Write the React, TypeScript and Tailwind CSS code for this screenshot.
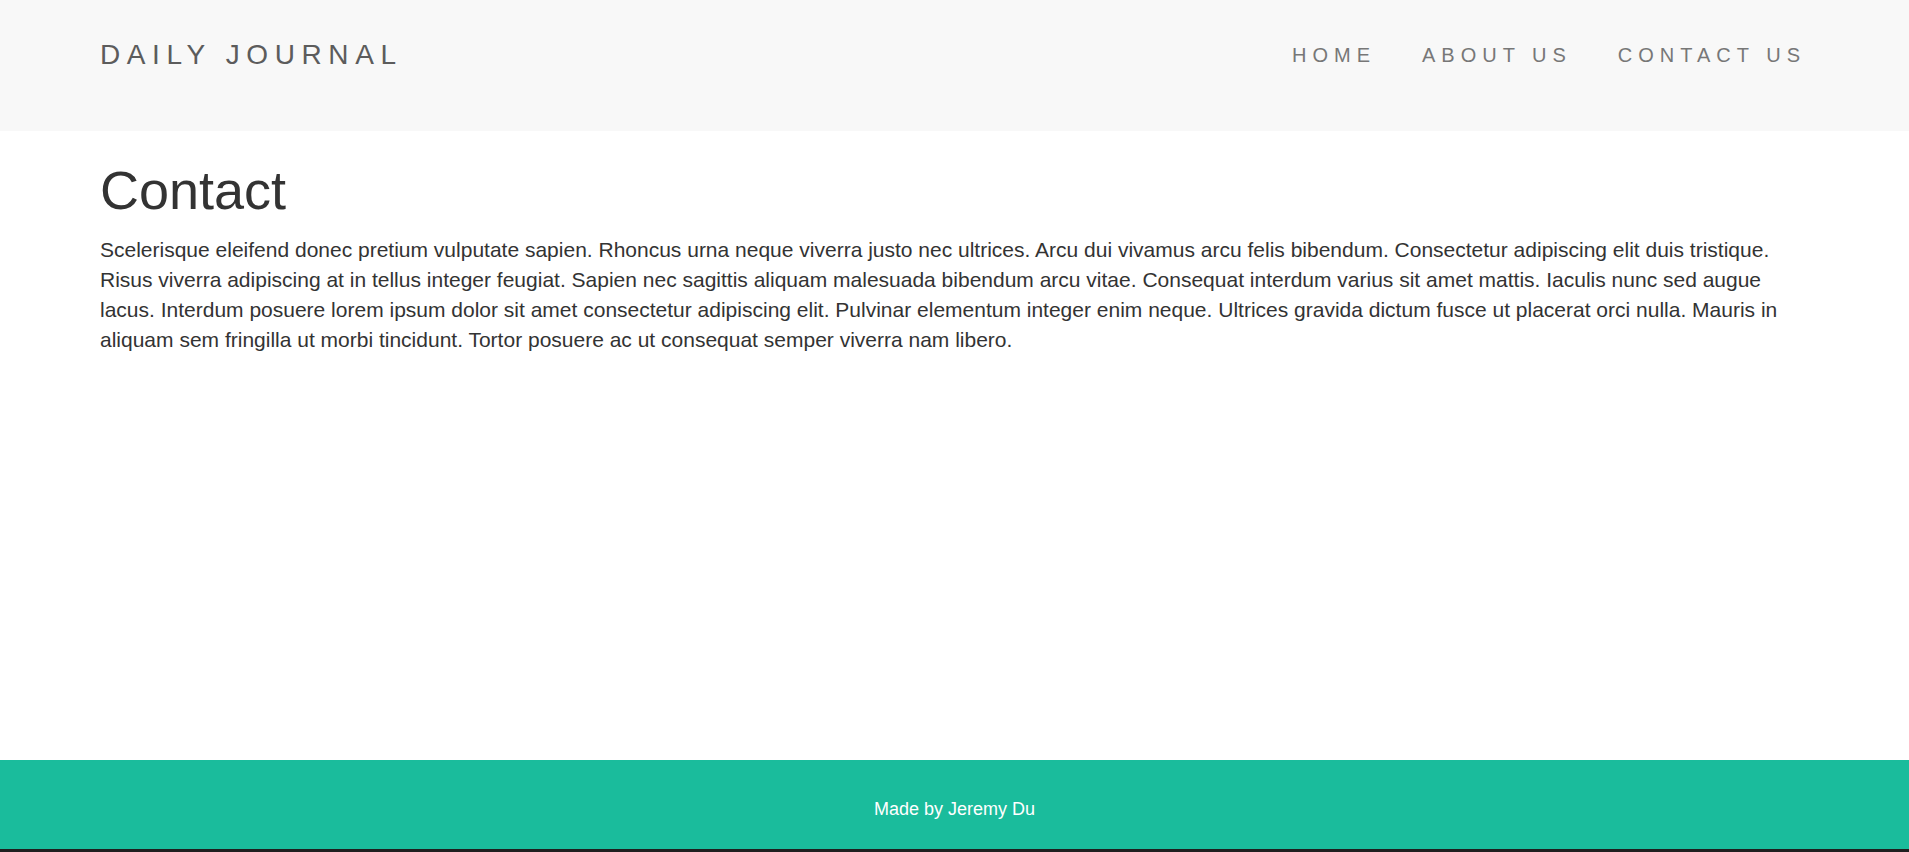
const navLinks = [
  { title: "HOME", href: "#" },
  { title: "ABOUT US", href: "#about" },
  { title: "CONTACT US", href: "#contact" },
]

const contactText =
  "Scelerisque eleifend donec pretium vulputate sapien. Rhoncus urna neque viverra justo nec ultrices. Arcu dui vivamus arcu felis bibendum. Consectetur adipiscing elit duis tristique. Risus viverra adipiscing at in tellus integer feugiat. Sapien nec sagittis aliquam malesuada bibendum arcu vitae. Consequat interdum varius sit amet mattis. Iaculis nunc sed augue lacus. Interdum posuere lorem ipsum dolor sit amet consectetur adipiscing elit. Pulvinar elementum integer enim neque. Ultrices gravida dictum fusce ut placerat orci nulla. Mauris in aliquam sem fringilla ut morbi tincidunt. Tortor posuere ac ut consequat semper viverra nam libero."

const Header = () => {
  return (
    <header className="h-[131px] w-full bg-[#f8f8f8]">
      <div className="flex h-[110px] items-center justify-between pl-[100px] pr-[103px]">
        {/* Brand */}
        <a href="#" className="text-[28px] leading-[32px] tracking-[6.6px] text-[#5c5c5c]">
          DAILY JOURNAL
        </a>

        {/* Menu */}
        <nav className="flex items-center gap-[46px]">
          {navLinks.map((item) => (
            <a
              key={item.title}
              href={item.href}
              className="text-[20px] leading-[22px] tracking-[6px] text-[#777777] hover:text-[#333333]"
            >
              {item.title}
            </a>
          ))}
        </nav>
      </div>
    </header>
  )
}

const Footer = () => {
  return (
    <footer className="flex h-[89px] w-full justify-center bg-[#1abc9c] pt-[40px]">
      <p className="text-[18px] leading-[18px] text-white">Made by Jeremy Du</p>
    </footer>
  )
}

export default function App() {
  return (
    <div className="flex min-h-[852px] w-full flex-col bg-white font-['Liberation_Sans',Arial,sans-serif]">
      <Header />

      {/* Page content */}
      <main className="flex-1 px-[100px]">
        <h1 className="mt-[29.5px] text-[54px] leading-[59.4px] font-normal text-[#333333]">Contact</h1>
        <p className="mt-[15px] text-[21px] leading-[30px] text-[#333333]">{contactText}</p>
      </main>

      <Footer />
      <div className="h-[3px] w-full bg-[#1f1f1f]" />
    </div>
  )
}
